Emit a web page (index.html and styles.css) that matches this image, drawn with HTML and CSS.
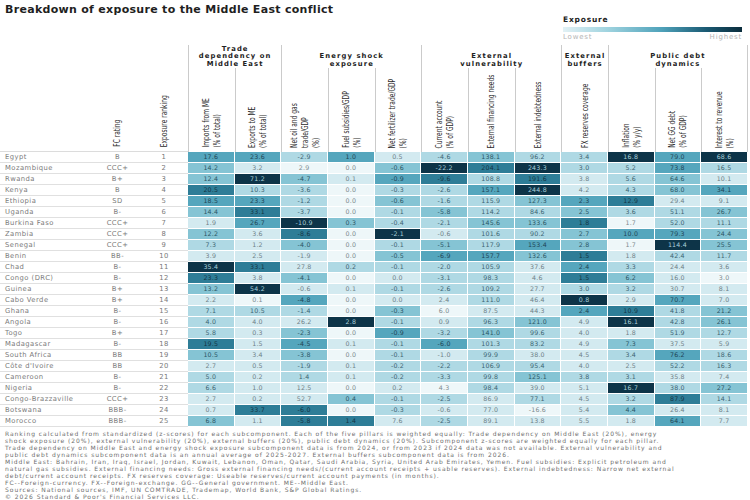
FILE: index.html
```html
<!DOCTYPE html>
<html lang="en">
<head>
<meta charset="utf-8">
<title>Breakdown of exposure to the Middle East conflict</title>
<link rel="stylesheet" href="styles.css">
</head>
<body>
<div class="page">
  <div class="top">
    <h1 class="title">Breakdown of exposure to the Middle East conflict</h1>
    <div class="legend">
      <div class="legend-title">Exposure</div>
      <div class="legend-bar"></div>
      <div class="legend-scale"><span>Lowest</span><span>Highest</span></div>
    </div>
  </div>

  <div class="thead">
    <div class="lft"></div>
    <div class="lft mid"><span class="vt">FC rating</span></div>
    <div class="lft mid"><span class="vt">Exposure ranking</span></div>

    <div class="grp g2">Trade<br>dependency on<br>Middle East</div>
    <div class="grp g3">Energy shock<br>exposure</div>
    <div class="grp g3">External<br>vulnerability</div>
    <div class="grp g1">External<br>buffers</div>
    <div class="grp g3 last">Public debt<br>dynamics</div>

    <div class="cl"><span class="vt">Imports from ME<br>(% of total)</span></div>
    <div class="cl sub"><span class="vt">Exports to ME<br>(% of total)</span></div>
    <div class="cl"><span class="vt">Net oil and gas<br>trade/GDP<br>(%)</span></div>
    <div class="cl sub"><span class="vt">Fuel subsidies/GDP<br>(%)</span></div>
    <div class="cl sub"><span class="vt">Net fertilizer trade/GDP<br>(%)</span></div>
    <div class="cl"><span class="vt">Current account<br>(% of GDP)</span></div>
    <div class="cl sub"><span class="vt">External financing needs</span></div>
    <div class="cl sub"><span class="vt">External indebtedness</span></div>
    <div class="cl"><span class="vt">FX reserves coverage</span></div>
    <div class="cl"><span class="vt">Inflation<br>(% y/y)</span></div>
    <div class="cl sub"><span class="vt">Net GG debt<br>(% of GDP)</span></div>
    <div class="cl sub last"><span class="vt">Interest to revenue<br>(%)</span></div>
  </div>

  <div class="tbody">
    <div class="row"><span class="n">Egypt</span><span class="r">B</span><span class="k">1</span><span class="c l4">17.6</span><span class="c l4">23.6</span><span class="c l2">-2.9</span><span class="c l4">1.0</span><span class="c l1">0.5</span><span class="c l2">-4.6</span><span class="c l3">138.1</span><span class="c l2">96.2</span><span class="c l2">3.4</span><span class="c l6">16.8</span><span class="c l4">79.0</span><span class="c l6">68.6</span></div>
    <div class="row"><span class="n">Mozambique</span><span class="r">CCC+</span><span class="k">2</span><span class="c l3">14.2</span><span class="c l1">3.2</span><span class="c l0">2.9</span><span class="c l0">0.0</span><span class="c l3">-0.6</span><span class="c l6">-22.2</span><span class="c l5">204.1</span><span class="c l6">243.3</span><span class="c l2">3.0</span><span class="c l2">5.2</span><span class="c l4">73.8</span><span class="c l2">16.5</span></div>
    <div class="row"><span class="n">Rwanda</span><span class="r">B+</span><span class="k">3</span><span class="c l3">12.4</span><span class="c l6">71.2</span><span class="c l3">-4.7</span><span class="c l1">0.1</span><span class="c l4">-0.9</span><span class="c l5">-9.6</span><span class="c l2">108.8</span><span class="c l5">191.6</span><span class="c l1">3.8</span><span class="c l2">5.6</span><span class="c l3">64.6</span><span class="c l1">10.1</span></div>
    <div class="row"><span class="n">Kenya</span><span class="r">B</span><span class="k">4</span><span class="c l5">20.5</span><span class="c l2">10.3</span><span class="c l2">-3.6</span><span class="c l0">0.0</span><span class="c l2">-0.3</span><span class="c l2">-2.6</span><span class="c l4">157.1</span><span class="c l6">244.8</span><span class="c l1">4.2</span><span class="c l2">4.3</span><span class="c l3">68.0</span><span class="c l4">34.1</span></div>
    <div class="row"><span class="n">Ethiopia</span><span class="r">SD</span><span class="k">5</span><span class="c l4">18.5</span><span class="c l4">23.3</span><span class="c l2">-1.2</span><span class="c l0">0.0</span><span class="c l3">-0.6</span><span class="c l2">-1.6</span><span class="c l2">115.9</span><span class="c l3">127.3</span><span class="c l4">2.3</span><span class="c l5">12.9</span><span class="c l1">29.4</span><span class="c l1">9.1</span></div>
    <div class="row"><span class="n">Uganda</span><span class="r">B-</span><span class="k">6</span><span class="c l3">14.4</span><span class="c l5">33.1</span><span class="c l2">-3.7</span><span class="c l0">0.0</span><span class="c l2">-0.1</span><span class="c l3">-5.8</span><span class="c l2">114.2</span><span class="c l2">84.6</span><span class="c l3">2.5</span><span class="c l2">3.6</span><span class="c l2">51.1</span><span class="c l3">26.7</span></div>
    <div class="row"><span class="n">Burkina Faso</span><span class="r">CCC+</span><span class="k">7</span><span class="c l1">1.9</span><span class="c l4">26.7</span><span class="c l6">-10.9</span><span class="c l3">0.3</span><span class="c l2">-0.4</span><span class="c l2">-2.1</span><span class="c l3">145.6</span><span class="c l3">133.6</span><span class="c l5">1.8</span><span class="c l0">1.7</span><span class="c l2">52.0</span><span class="c l2">11.1</span></div>
    <div class="row"><span class="n">Zambia</span><span class="r">CCC+</span><span class="k">8</span><span class="c l3">12.2</span><span class="c l1">3.6</span><span class="c l5">-8.6</span><span class="c l0">0.0</span><span class="c l6">-2.1</span><span class="c l1">-0.6</span><span class="c l2">101.6</span><span class="c l2">90.2</span><span class="c l3">2.7</span><span class="c l4">10.0</span><span class="c l4">79.3</span><span class="c l3">24.4</span></div>
    <div class="row"><span class="n">Senegal</span><span class="r">CCC+</span><span class="k">9</span><span class="c l2">7.3</span><span class="c l1">1.2</span><span class="c l3">-4.0</span><span class="c l0">0.0</span><span class="c l2">-0.1</span><span class="c l3">-5.1</span><span class="c l2">117.9</span><span class="c l4">153.4</span><span class="c l3">2.8</span><span class="c l0">1.7</span><span class="c l6">114.4</span><span class="c l3">25.5</span></div>
    <div class="row"><span class="n">Benin</span><span class="r">BB-</span><span class="k">10</span><span class="c l1">3.9</span><span class="c l1">2.5</span><span class="c l1">-1.9</span><span class="c l0">0.0</span><span class="c l3">-0.5</span><span class="c l4">-6.9</span><span class="c l4">157.7</span><span class="c l3">132.6</span><span class="c l5">1.5</span><span class="c l1">1.8</span><span class="c l2">42.4</span><span class="c l2">11.7</span></div>
    <div class="row"><span class="n">Chad</span><span class="r">B-</span><span class="k">11</span><span class="c l6">35.4</span><span class="c l5">33.1</span><span class="c l1">27.8</span><span class="c l2">0.2</span><span class="c l2">-0.1</span><span class="c l2">-2.0</span><span class="c l2">105.9</span><span class="c l1">37.6</span><span class="c l4">2.4</span><span class="c l2">3.3</span><span class="c l1">24.4</span><span class="c l1">3.6</span></div>
    <div class="row"><span class="n">Congo (DRC)</span><span class="r">B-</span><span class="k">12</span><span class="c l5">23.3</span><span class="c l1">3.8</span><span class="c l3">-4.1</span><span class="c l0">0.0</span><span class="c l1">0.0</span><span class="c l2">-3.1</span><span class="c l2">98.3</span><span class="c l1">4.6</span><span class="c l5">1.5</span><span class="c l3">6.2</span><span class="c l1">16.0</span><span class="c l0">3.0</span></div>
    <div class="row"><span class="n">Guinea</span><span class="r">B+</span><span class="k">13</span><span class="c l3">13.2</span><span class="c l6">54.2</span><span class="c l1">-0.6</span><span class="c l1">0.1</span><span class="c l2">-0.1</span><span class="c l2">-2.6</span><span class="c l2">109.2</span><span class="c l1">27.7</span><span class="c l2">3.0</span><span class="c l2">3.2</span><span class="c l1">30.7</span><span class="c l1">8.1</span></div>
    <div class="row"><span class="n">Cabo Verde</span><span class="r">B+</span><span class="k">14</span><span class="c l1">2.2</span><span class="c l0">0.1</span><span class="c l4">-4.8</span><span class="c l0">0.0</span><span class="c l1">0.0</span><span class="c l1">2.4</span><span class="c l2">111.0</span><span class="c l1">46.4</span><span class="c l6">0.8</span><span class="c l1">2.9</span><span class="c l4">70.7</span><span class="c l1">7.0</span></div>
    <div class="row"><span class="n">Ghana</span><span class="r">B-</span><span class="k">15</span><span class="c l2">7.1</span><span class="c l2">10.5</span><span class="c l2">-1.4</span><span class="c l0">0.0</span><span class="c l3">-0.3</span><span class="c l0">6.0</span><span class="c l1">87.5</span><span class="c l1">44.3</span><span class="c l4">2.4</span><span class="c l5">10.9</span><span class="c l2">41.8</span><span class="c l3">21.2</span></div>
    <div class="row"><span class="n">Angola</span><span class="r">B-</span><span class="k">16</span><span class="c l2">4.0</span><span class="c l1">4.0</span><span class="c l1">26.2</span><span class="c l6">2.8</span><span class="c l2">-0.1</span><span class="c l1">0.9</span><span class="c l2">96.3</span><span class="c l3">121.0</span><span class="c l1">4.9</span><span class="c l6">16.1</span><span class="c l2">42.8</span><span class="c l3">26.1</span></div>
    <div class="row"><span class="n">Togo</span><span class="r">B+</span><span class="k">17</span><span class="c l2">5.8</span><span class="c l1">0.3</span><span class="c l3">-2.3</span><span class="c l0">0.0</span><span class="c l4">-0.9</span><span class="c l2">-3.2</span><span class="c l3">141.0</span><span class="c l2">99.6</span><span class="c l1">4.0</span><span class="c l1">1.8</span><span class="c l2">51.9</span><span class="c l2">12.7</span></div>
    <div class="row"><span class="n">Madagascar</span><span class="r">B-</span><span class="k">18</span><span class="c l5">19.5</span><span class="c l1">1.5</span><span class="c l4">-4.5</span><span class="c l1">0.1</span><span class="c l2">-0.1</span><span class="c l4">-6.0</span><span class="c l2">101.3</span><span class="c l2">83.2</span><span class="c l1">4.9</span><span class="c l3">7.3</span><span class="c l1">37.5</span><span class="c l1">5.9</span></div>
    <div class="row"><span class="n">South Africa</span><span class="r">BB</span><span class="k">19</span><span class="c l3">10.5</span><span class="c l1">3.4</span><span class="c l3">-3.8</span><span class="c l0">0.0</span><span class="c l2">-0.1</span><span class="c l1">-1.0</span><span class="c l2">99.9</span><span class="c l1">38.0</span><span class="c l1">4.5</span><span class="c l2">3.4</span><span class="c l4">76.2</span><span class="c l2">18.6</span></div>
    <div class="row"><span class="n">Côte d'Ivoire</span><span class="r">BB</span><span class="k">20</span><span class="c l1">2.7</span><span class="c l1">0.5</span><span class="c l2">-1.9</span><span class="c l1">0.1</span><span class="c l2">-0.2</span><span class="c l2">-2.2</span><span class="c l2">106.9</span><span class="c l2">95.4</span><span class="c l1">4.0</span><span class="c l1">2.5</span><span class="c l2">52.2</span><span class="c l2">16.3</span></div>
    <div class="row"><span class="n">Cameroon</span><span class="r">B-</span><span class="k">21</span><span class="c l2">5.0</span><span class="c l1">0.2</span><span class="c l2">1.4</span><span class="c l1">0.1</span><span class="c l2">-0.2</span><span class="c l2">-3.3</span><span class="c l2">99.8</span><span class="c l3">125.1</span><span class="c l2">3.8</span><span class="c l2">3.1</span><span class="c l1">35.8</span><span class="c l1">7.4</span></div>
    <div class="row"><span class="n">Nigeria</span><span class="r">B-</span><span class="k">22</span><span class="c l2">6.6</span><span class="c l1">1.0</span><span class="c l1">12.5</span><span class="c l0">0.0</span><span class="c l1">0.2</span><span class="c l0">4.3</span><span class="c l2">98.4</span><span class="c l1">39.0</span><span class="c l1">5.1</span><span class="c l6">16.7</span><span class="c l2">38.0</span><span class="c l3">27.2</span></div>
    <div class="row"><span class="n">Congo-Brazzaville</span><span class="r">CCC+</span><span class="k">23</span><span class="c l1">2.7</span><span class="c l1">0.2</span><span class="c l1">52.7</span><span class="c l3">0.4</span><span class="c l2">-0.1</span><span class="c l2">-2.5</span><span class="c l1">86.9</span><span class="c l2">77.1</span><span class="c l1">4.5</span><span class="c l2">3.2</span><span class="c l5">87.9</span><span class="c l2">14.1</span></div>
    <div class="row"><span class="n">Botswana</span><span class="r">BBB-</span><span class="k">24</span><span class="c l1">0.7</span><span class="c l5">33.7</span><span class="c l5">-6.0</span><span class="c l0">0.0</span><span class="c l2">-0.3</span><span class="c l1">-0.6</span><span class="c l1">77.0</span><span class="c l0">-16.6</span><span class="c l1">5.4</span><span class="c l3">4.4</span><span class="c l1">26.4</span><span class="c l1">8.1</span></div>
    <div class="row"><span class="n">Morocco</span><span class="r">BBB-</span><span class="k">25</span><span class="c l3">6.8</span><span class="c l1">1.1</span><span class="c l5">-5.8</span><span class="c l5">1.4</span><span class="c l1">7.6</span><span class="c l2">-2.5</span><span class="c l1">89.1</span><span class="c l1">13.8</span><span class="c l1">5.5</span><span class="c l1">1.8</span><span class="c l4">64.1</span><span class="c l1">7.7</span></div>
  </div>

  <p class="foot">Ranking calculated from standardized (z-scores) for each subcomponent. Each of the five pillars is weighted equally: Trade dependency on Middle East (20%), energy<br>shock exposure (20%), external vulnerability (20%), external buffers (20%), public debt dynamics (20%). Subcomponent z-scores are weighted equally for each pillar.<br>Trade dependency on Middle East and energy shock exposure subcomponent data is from 2024, or from 2023 if 2024 data was not available. External vulnerability and<br>public debt dynamics subcomponent data is an annual average of 2025-2027. External buffers subcomponent data is from 2026.<br>Middle East: Bahrain, Iran, Iraq, Israel, Jordan, Kuwait, Lebanon, Oman, Qatar, Saudi Arabia, Syria, United Arab Emirates, Yemen. Fuel subsidies: Explicit petroleum and<br>natural gas subsidies. External financing needs: Gross external financing needs/(current account receipts + usable reserves). External indebtedness: Narrow net external<br>debt/current account receipts. FX reserves coverage: Useable reserves/current account payments (in months).<br>FC--Foreign-currency. FX--Foreign-exchange. GG--General government. ME--Middle East.<br>Sources: National sources, IMF, UN COMTRADE, Trademap, World Bank, S&amp;P Global Ratings.<br>© 2026 Standard &amp; Poor's Financial Services LLC.</p>
</div>
</body>
</html>
```
FILE: styles.css
```css
* { box-sizing: border-box; }

body {
  margin: 0;
  width: 750px;
  height: 500px;
  overflow: hidden;
  background: #ffffff;
  font-family: "DejaVu Sans", "Liberation Sans", sans-serif;
  color: #333;
}

.page { width: 750px; }

/* ---------- top: title + legend ---------- */
.top {
  display: flex;
  justify-content: space-between;
  align-items: flex-start;
  height: 45px;
}

.title {
  margin: 4px 0 0 5px;
  font-size: 11px;
  line-height: 12px;
  font-weight: bold;
  letter-spacing: 0.3px;
  color: #1f1f1f;
}

.legend {
  width: 179px;
  margin: 16px 8px 0 0;
}

.legend-title {
  font-size: 7.5px;
  line-height: 8px;
  font-weight: bold;
  letter-spacing: 0.8px;
  color: #222;
}

.legend-bar {
  height: 5px;
  margin-top: 3px;
  background: linear-gradient(90deg, #e2f1f5 0%, #9fd3df 25%, #4fa2ba 55%, #1b5a73 80%, #0a2c3c 100%);
}

.legend-scale {
  display: flex;
  justify-content: space-between;
  margin-top: 1px;
  font-size: 7px;
  line-height: 8px;
  letter-spacing: 0.8px;
  color: #b5b5b5;
}

/* ---------- table header ---------- */
.thead,
.row {
  display: grid;
  grid-template-columns: 95px 45px 48px repeat(12, 46.6667px);
}

.thead {
  grid-template-rows: 23px 84px;
}

.lft {
  grid-row: 1 / 3;
  border-bottom: 1px solid #dcdcdc;
}

.mid {
  display: flex;
  justify-content: center;
  align-items: flex-end;
  padding-bottom: 4px;
}

.grp {
  grid-row: 1;
  border-left: 1px solid #cbcbcb;
  display: flex;
  align-items: flex-end;
  justify-content: center;
  text-align: center;
  padding-bottom: 0;
  font-size: 6.8px;
  line-height: 7.3px;
  font-weight: bold;
  letter-spacing: 1.1px;
  color: #222;
  white-space: nowrap;
}

.g1 { grid-column: span 1; }
.g2 { grid-column: span 2; }
.g3 { grid-column: span 3; }

.cl {
  grid-row: 2;
  border-left: 1px solid #cbcbcb;
  display: flex;
  justify-content: center;
  align-items: flex-end;
  padding-bottom: 4px;
}

.last { border-right: 1px solid #cbcbcb; }

/* vertical labels: rotated and condensed along the text direction */
.vt {
  writing-mode: vertical-rl;
  transform: translateY(15%) rotate(180deg) scaleY(0.7);
  white-space: nowrap;
  font-family: "DejaVu Sans", sans-serif;
  font-size: 8.5px;
  line-height: 11px;
  color: #2b2b2b;
}

/* ---------- table body ---------- */
.row { height: 11px; }

.n, .r, .k {
  border-bottom: 1px solid #e0e0e0;
  font-size: 6.8px;
  line-height: 10px;
  letter-spacing: 0.45px;
  color: #7a7a7a;
  white-space: nowrap;
}

.n { padding-left: 5px; }
.r, .k { text-align: center; }

.c {
  border-right: 1px solid #ffffff;
  border-bottom: 1px solid #ffffff;
  text-align: center;
  font-size: 6.3px;
  line-height: 10px;
  letter-spacing: 0.2px;
}

.l0 { background: #eef7f9; color: #7c8a8e; }
.l1 { background: #d3eaf0; color: #6e8187; }
.l2 { background: #afd9e4; color: #3c6472; }
.l3 { background: #85c4d4; color: #2a5666; }
.l4 { background: #55a6bd; color: #1e4555; }
.l5 { background: #2e7d97; color: #133545; }
.l6 { background: #0d3448; color: #a9cfda; }

/* ---------- footnotes ---------- */
.foot {
  margin: 3px 0 0 5px;
  font-size: 6px;
  line-height: 7px;
  letter-spacing: 0.95px;
  color: #6e6e6e;
  white-space: nowrap;
}
```
